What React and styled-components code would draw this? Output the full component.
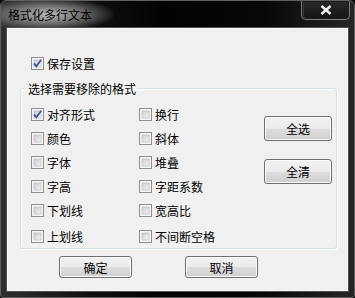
import React from 'react';
import styled, { createGlobalStyle } from 'styled-components';

const Global = createGlobalStyle`
  * { box-sizing: border-box; }
  body {
    margin: 0;
    background: #000;
    font-family: "Noto Sans CJK SC", "Liberation Sans", sans-serif;
  }
`;

const Window = styled.div`
  width: 355px;
  height: 298px;
  display: flex;
  flex-direction: column;
  padding: 0 6px 6px 6px;
  border: 1px solid #606060;
  border-radius: 6px 6px 3px 3px;
  background: linear-gradient(to right, #2e2e2e 0%, #101010 25%, #030303 45%, #080808 75%, #262626 100%);
`;

const TitleBar = styled.div`
  height: 27px;
  display: flex;
  justify-content: space-between;
  align-items: flex-start;
  margin: 0 -6px;
`;

const Title = styled.div`
  height: 27px;
  padding: 7px 22px 0 7px;
  font-size: 12px;
  line-height: 13px;
  color: #000;
  background: radial-gradient(ellipse 60% 62% at 42% 50%, rgba(215, 215, 215, 0.85) 0%, rgba(170, 170, 170, 0.55) 55%, rgba(60, 60, 60, 0) 100%);
`;

const CloseButton = styled.div`
  width: 49px;
  height: 19px;
  margin-right: 4px;
  display: flex;
  align-items: center;
  justify-content: center;
  border: 1px solid #7a7a7a;
  border-top: none;
  border-radius: 0 0 5px 5px;
  background: linear-gradient(#2a2a2a, #141414);
  box-shadow: inset 0 0 0 1px #1c1c1c, inset 1px 0 0 1px #3a3a3a;
`;

const Client = styled.div`
  flex: 1;
  display: flex;
  flex-direction: column;
  background: #f0f0f0;
  border: 1px solid #fbfbfb;
  box-shadow: 0 0 0 1px #4e4e4e;
`;

const SaveRow = styled.div`
  margin: 28px 0 0 23px;
`;

const Group = styled.fieldset`
  margin: 12px 0 0 12px;
  width: 317px;
  padding: 13px 3px 5px 10px;
  border: 1px solid #d5dfe5;
  border-radius: 3px;
  box-shadow: inset 1px 1px 0 #fff, 1px 1px 0 #fff;
`;

const Legend = styled.legend`
  padding: 0 2px;
  margin-left: -5px;
  font-size: 12px;
  line-height: 13px;
  color: #000;
`;

const GroupBody = styled.div`
  display: flex;
`;

const CheckGrid = styled.div`
  display: grid;
  grid-template-columns: 108px 125px;
  grid-template-rows: repeat(5, 24px) 15px;
`;

const Cell = styled.div`
  margin-top: ${(p) => (p.$last ? '2px' : '0')};
`;

const ButtonCol = styled.div`
  display: flex;
  flex-direction: column;
  gap: 18px;
  padding-top: 8px;
`;

const Button = styled.div`
  width: ${(p) => p.$w}px;
  height: ${(p) => p.$h}px;
  display: flex;
  align-items: center;
  justify-content: center;
  font-size: 12px;
  color: #000;
  border: 1px solid #707070;
  border-radius: 3px;
  background: linear-gradient(#f2f2f2 0%, #ebebeb 50%, #dddddd 51%, #cfcfcf 100%);
  box-shadow: inset 0 0 0 1px #fbfbfb;
`;

const Footer = styled.div`
  display: flex;
  gap: 53px;
  margin: 7px 0 0 51px;
`;

const CheckLabel = styled.label`
  display: flex;
  align-items: center;
  gap: 3px;
  height: 13px;
  font-size: 12px;
  line-height: 13px;
  color: #000;
`;

const Box = ({ checked }) => (
  <svg width="13" height="13" viewBox="0 0 13 13">
    <defs>
      <linearGradient id="cbfill" x1="0" y1="0" x2="1" y2="1">
        <stop offset="0" stopColor="#cbcbcb" />
        <stop offset="1" stopColor="#f7f7f7" />
      </linearGradient>
    </defs>
    <rect x="0.5" y="0.5" width="12" height="12" fill="#f4f4f4" stroke="#8e8f8f" />
    <rect x="3" y="3" width="7" height="7" fill="url(#cbfill)" stroke="#b5b5b5" strokeWidth="0.6" />
    {checked && (
      <path d="M3 6.4 L5.3 9.2 L10.2 2.8" fill="none" stroke="#3a55a0" strokeWidth="1.8" />
    )}
  </svg>
);

const Check = ({ checked, children }) => (
  <CheckLabel>
    <Box checked={checked} />
    <span>{children}</span>
  </CheckLabel>
);

const options = [
  ['对齐形式', true], ['换行', false],
  ['颜色', false], ['斜体', false],
  ['字体', false], ['堆叠', false],
  ['字高', false], ['字距系数', false],
  ['下划线', false], ['宽高比', false],
  ['上划线', false], ['不间断空格', false],
];

const App = () => (
  <>
    <Global />
    <Window>
      <TitleBar>
        <Title>格式化多行文本</Title>
        <CloseButton>
          <svg width="12" height="10" viewBox="0 0 12 10">
            <path d="M1.5 1 L10.5 9 M10.5 1 L1.5 9" stroke="#f4f4f4" strokeWidth="2.4" />
          </svg>
        </CloseButton>
      </TitleBar>
      <Client>
        <SaveRow>
          <Check checked>保存设置</Check>
        </SaveRow>
        <Group>
          <Legend>选择需要移除的格式</Legend>
          <GroupBody>
            <CheckGrid>
              {options.map(([label, checked], i) => (
                <Cell key={label} $last={i >= 10}>
                  <Check checked={checked}>{label}</Check>
                </Cell>
              ))}
            </CheckGrid>
            <ButtonCol>
              <Button $w={68} $h={25}>全选</Button>
              <Button $w={68} $h={25}>全清</Button>
            </ButtonCol>
          </GroupBody>
        </Group>
        <Footer>
          <Button $w={73} $h={22}>确定</Button>
          <Button $w={73} $h={22}>取消</Button>
        </Footer>
      </Client>
    </Window>
  </>
);

export default App;
